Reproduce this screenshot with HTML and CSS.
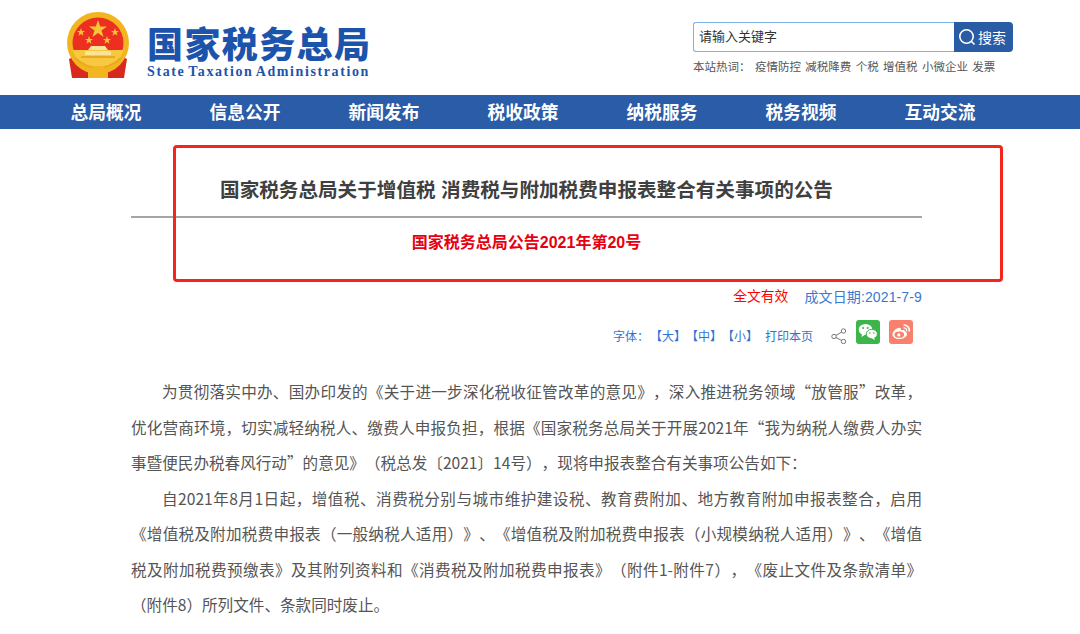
FILE: index.html
```html
<!DOCTYPE html>
<html lang="zh-CN">
  <head>
    <meta charset="UTF-8" />
    <title>国家税务总局</title>
    <link rel="stylesheet" href="styles.css">
  </head>
  <body>
    <header class="top">
      <div class="logo">
        <svg class="emblem" width="62" height="68" viewBox="0 0 62 68">
          <path d="M8 44 L2 47 L5 66 L22 66 L31 62 L40 66 L57 66 L60 47 L54 44 Z" fill="#d9281e"/>
          <circle cx="31" cy="31" r="31" fill="#f2b51f"/>
          <circle cx="31" cy="31" r="25.5" fill="#ec2f20"/>
          <path d="M5.5 38 H56.5 A25.5 25.5 0 0 1 31 56.5 A25.5 25.5 0 0 1 5.5 38 Z" fill="#f7c840"/>
          <polygon points="31,8 33.2,14.6 40,14.6 34.5,18.6 36.6,25 31,21 25.4,25 27.5,18.6 22,14.6 28.8,14.6" fill="#f8c537"/>
          <polygon points="14,16 15,19 18,19 15.6,20.8 16.5,23.7 14,22 11.5,23.7 12.4,20.8 10,19 13,19" fill="#f8c537"/>
          <polygon points="48,16 49,19 52,19 49.6,20.8 50.5,23.7 48,22 45.5,23.7 46.4,20.8 44,19 47,19" fill="#f8c537"/>
          <polygon points="22,24 23,27 26,27 23.6,28.8 24.5,31.7 22,30 19.5,31.7 20.4,28.8 18,27 21,27" fill="#f8c537"/>
          <polygon points="40,24 41,27 44,27 41.6,28.8 42.5,31.7 40,30 37.5,31.7 38.4,28.8 36,27 39,27" fill="#f8c537"/>
          <path d="M24 34 L38 34 L41 38 H21 Z" fill="#fbe39a"/>
          <rect x="18" y="39" width="26" height="4" fill="#fbe39a"/>
          <rect x="14" y="44" width="34" height="2" fill="#e9a91f"/>
          <path d="M8 46 Q31 66 54 46" fill="none" stroke="#e9a91f" stroke-width="2"/>
          <path d="M21 58 Q31 50 41 58 L41 66 H21 Z" fill="#f2b51f"/>
        </svg>
        <div class="wordmark">
          <div class="wordmark-cn">国家税务总局</div>
          <div class="wordmark-en">State Taxation Administration</div>
        </div>
      </div>
      <div class="search">
        <div class="search-box">
          <div class="search-input">请输入关键字</div>
          <div class="search-btn">
            <svg width="18" height="18" viewBox="0 0 18 18" fill="none" stroke="#fff" stroke-width="1.6">
              <circle cx="8.5" cy="8.5" r="6.7"/>
              <path d="M13.4 13.4 L16.5 16.5"/>
            </svg>
            <span>搜索</span>
          </div>
        </div>
        <div class="hot">
          <span>本站热词：</span>
          <span>疫情防控</span>
          <span>减税降费</span>
          <span>个税</span>
          <span>增值税</span>
          <span>小微企业</span>
          <span>发票</span>
        </div>
      </div>
    </header>

    <nav class="nav">
      <a>总局概况</a>
      <a>信息公开</a>
      <a>新闻发布</a>
      <a>税收政策</a>
      <a>纳税服务</a>
      <a>税务视频</a>
      <a>互动交流</a>
    </nav>

    <main class="article">
      <h1 class="title">国家税务总局关于增值税 消费税与附加税费申报表整合有关事项的公告</h1>
      <h2 class="doc-no">国家税务总局公告2021年第20号</h2>
      <div class="meta">
        <span class="status">全文有效</span>
        <span class="date">成文日期:2021-7-9</span>
      </div>
      <div class="tools">
        <span class="tool-text font-label">字体：</span>
        <span class="tool-text">【大】</span>
        <span class="tool-text">【中】</span>
        <span class="tool-text">【小】</span>
        <span class="tool-text print">打印本页</span>
        <svg class="share" width="16" height="16" viewBox="0 0 16 16" fill="none" stroke="#777" stroke-width="1">
          <circle cx="12.5" cy="3" r="2.2"/>
          <circle cx="3" cy="8.5" r="2.2"/>
          <circle cx="12.5" cy="13.5" r="2.2"/>
          <path d="M10.6 4.1 L4.9 7.4 M4.9 9.5 L10.6 12.4"/>
        </svg>
        <svg class="social" width="24" height="24" viewBox="0 0 24 24">
          <rect width="24" height="24" rx="3" fill="#3cb54a"/>
          <ellipse cx="9.5" cy="9.5" rx="6.8" ry="5.6" fill="#fff"/>
          <path d="M6 13.5 L5.5 17 L9.5 14.5 Z" fill="#fff"/>
          <ellipse cx="15.8" cy="14" rx="5.6" ry="4.7" fill="#fff" stroke="#3cb54a"/>
          <path d="M18 17.5 L19 20 L15.5 18.3 Z" fill="#fff"/>
          <circle cx="7.2" cy="8" r="1" fill="#3cb54a"/>
          <circle cx="11.6" cy="8" r="1" fill="#3cb54a"/>
          <circle cx="13.8" cy="13" r=".8" fill="#3cb54a"/>
          <circle cx="17.8" cy="13" r=".8" fill="#3cb54a"/>
        </svg>
        <svg class="social" width="24" height="24" viewBox="0 0 24 24">
          <rect width="24" height="24" rx="3" fill="#f8806c"/>
          <path d="M10.5 19 C6.5 19 3.5 17 3.5 14.4 C3.5 11.6 7.5 7.8 10.3 7.8 C11.8 7.8 12.2 9 11.8 10.4 C14 9.6 16 9.8 16 11.4 C17.4 11.9 18 12.7 18 14 C18 16.8 14.5 19 10.5 19 Z" fill="#fff"/>
          <ellipse cx="10.3" cy="14.7" rx="4.8" ry="3.1" fill="#f8806c"/>
          <circle cx="9.8" cy="14.9" r="1.6" fill="#fff"/>
          <path d="M15 5 A5.2 5.2 0 0 1 20.2 11" fill="none" stroke="#fff" stroke-width="1.6" stroke-linecap="round"/>
          <path d="M15 7.8 A2.6 2.6 0 0 1 17.6 10.8" fill="none" stroke="#fff" stroke-width="1.3" stroke-linecap="round"/>
        </svg>
      </div>
      <div class="content">
        <p>为贯彻落实中办、国办印发的《关于进一步深化税收征管改革的意见》，深入推进税务领域“放管服”改革，优化营商环境，切实减轻纳税人、缴费人申报负担，根据《国家税务总局关于开展2021年“我为纳税人缴费人办实事暨便民办税春风行动”的意见》（税总发〔2021〕14号），现将申报表整合有关事项公告如下：</p>
        <p>自2021年8月1日起，增值税、消费税分别与城市维护建设税、教育费附加、地方教育附加申报表整合，启用《增值税及附加税费申报表（一般纳税人适用）》、《增值税及附加税费申报表（小规模纳税人适用）》、《增值税及附加税费预缴表》及其附列资料和《消费税及附加税费申报表》（附件1-附件7），《废止文件及条款清单》（附件8）所列文件、条款同时废止。</p>
      </div>
    </main>

    <div class="highlight"></div>
  </body>
</html>
```
FILE: styles.css
```css
body {
  margin: 0;
  background: #fff;
  color: #333;
  font-family: "Liberation Sans", "Noto Sans CJK SC", sans-serif;
  overflow: hidden;
}
h1,
h2,
p {
  margin: 0;
}

/* header */
.top {
  height: 95px;
  display: flex;
  justify-content: space-between;
  padding: 0 67px;
  box-sizing: border-box;
}
.logo {
  display: flex;
  padding-top: 12px;
}
.emblem {
  margin-right: 18px;
}
.wordmark {
  color: #1c54ac;
  padding-top: 8px;
}
.wordmark-cn {
  font-family: "Noto Sans CJK SC", sans-serif;
  font-weight: 900;
  font-size: 36px;
  line-height: 44px;
  letter-spacing: 1.4px;
  white-space: nowrap;
}
.wordmark-en {
  font-family: "Liberation Serif", serif;
  font-weight: 700;
  font-size: 14px;
  line-height: 16px;
  letter-spacing: 1.6px;
  word-spacing: -2px;
  white-space: nowrap;
}
.search {
  width: 320px;
  padding-top: 22px;
}
.search-box {
  display: flex;
  height: 30px;
}
.search-input {
  flex: 1;
  border: 1px solid #7fb5ea;
  border-right: none;
  border-radius: 3px 0 0 3px;
  padding-left: 5px;
  font-size: 13px;
  line-height: 28px;
  color: #333;
}
.search-btn {
  width: 59px;
  background: #2a5ba5;
  border-radius: 0 4px 4px 0;
  color: #fff;
  font-size: 14px;
  display: flex;
  align-items: center;
  padding-left: 4px;
  box-sizing: border-box;
  gap: 2px;
}
.hot {
  margin-top: 7px;
  display: flex;
  gap: 4.4px;
  font-size: 11.5px;
  line-height: 16px;
  color: #555;
}

/* nav */
.nav {
  height: 34px;
  background: #2a5ca8;
  display: flex;
  padding-left: 36.5px;
}
.nav a {
  width: 139px;
  text-align: center;
  color: #fff;
  font-size: 17.7px;
  font-weight: 700;
  line-height: 36px;
}

/* article */
.article {
  width: 791px;
  margin-left: 131px;
}
.title {
  height: 89px;
  line-height: 122px;
  border-bottom: 2px solid #a5a5a5;
  text-align: center;
  font-size: 19.6px;
  font-weight: 700;
  color: #404040;
  box-sizing: border-box;
  white-space: nowrap;
}
.doc-no {
  margin-top: 14px;
  text-align: center;
  font-size: 16px;
  line-height: 22px;
  font-weight: 700;
  color: #e60012;
}
.meta {
  margin-top: 33px;
  display: flex;
  justify-content: flex-end;
  gap: 16px;
  font-size: 14px;
  line-height: 20px;
}
.status {
  color: #f00;
  font-size: 13.8px;
}
.date {
  color: #3a78d0;
  letter-spacing: 0.13px;
}
.tools {
  margin-top: 13px;
  display: flex;
  font-size: 12px;
  height: 24px;
  color: #2f74d0;
  padding-right: 9px;
  justify-content: flex-end;
}
.tool-text {
  padding-top: 9px;
  line-height: 16px;
}
.font-label {
  margin-right: 1px;
}
.print {
  margin-left: 7px;
  margin-right: 18px;
}
.share {
  margin: 8px 9px 0 0;
}
.social + .social {
  margin-left: 9px;
}
.content {
  margin-top: 30px;
  font-family: "Noto Sans CJK SC", sans-serif;
  font-size: 15.6px;
  line-height: 35.5px;
  color: #555;
  text-spacing-trim: space-all;
}
.content p {
  text-indent: 31px;
  text-align: justify;
}

/* red box drawn over the screenshot */
.highlight {
  position: absolute;
  left: 173px;
  top: 145px;
  width: 830px;
  height: 137px;
  box-sizing: border-box;
  border: 3px solid #f5241c;
  border-radius: 4px;
}
```
